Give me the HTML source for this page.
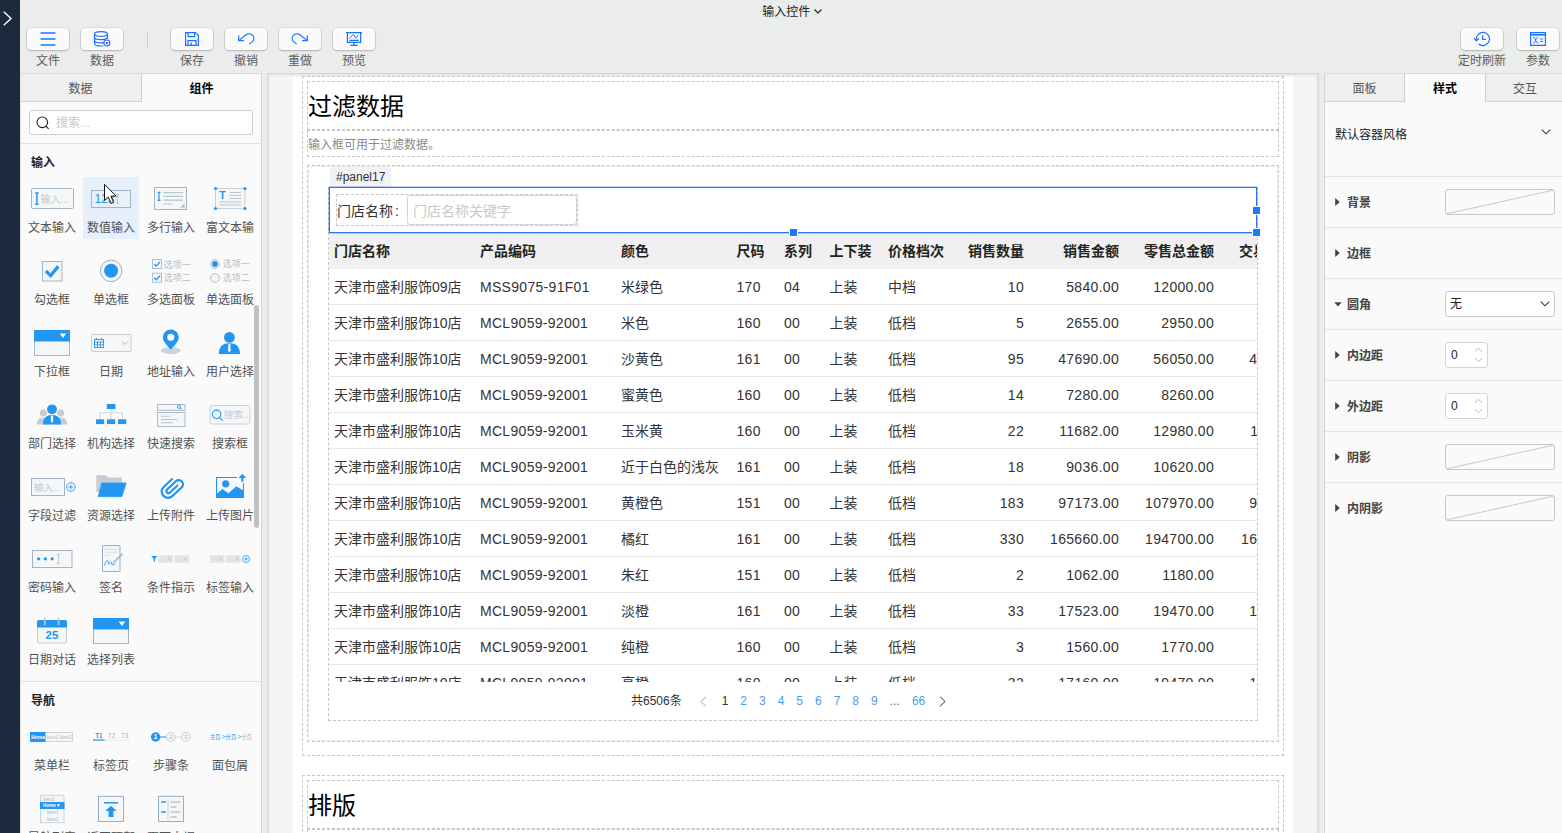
<!DOCTYPE html>
<html lang="zh-CN">
<head>
<meta charset="utf-8">
<title>输入控件</title>
<style>
*{box-sizing:border-box;margin:0;padding:0}
html,body{width:1562px;height:833px;overflow:hidden}
body{position:relative;background:#ebecec;font-family:"Liberation Sans","Noto Sans CJK SC",sans-serif;font-size:12px;color:#333;line-height:1}
.abs{position:absolute}
svg{display:block;overflow:visible}
/* dark rail */
#rail{position:absolute;left:0;top:0;width:20px;height:833px;background:#1c2a3e}
/* title */
#title{position:absolute;left:-1px;top:4px;width:1562px;text-align:center;font-size:12px;color:#222;height:16px;line-height:16px;padding-left:24px}
/* toolbar buttons */
.tb{position:absolute;top:28px;width:42px;height:22px;background:#fafafa;border-radius:4px;box-shadow:0 0 0 .6px rgba(0,0,0,.13),0 1px 2px rgba(0,0,0,.2)}
.tb svg{position:absolute;left:50%;top:50%;transform:translate(-50%,-50%)}
.tl{position:absolute;top:53px;width:80px;margin-left:-40px;text-align:center;font-size:12px;color:#5c5c5c;height:16px;line-height:16px}
#tsep{position:absolute;left:147px;top:33px;width:1px;height:14px;background:#c8c8c8}
/* left panel */
#lp{position:absolute;left:20px;top:73px;width:242px;height:760px;background:#fafafa;box-shadow:inset -1px 0 0 #d4d4d4,inset 0 1px 0 #d9d9d9;overflow:hidden}
.tab{position:absolute;top:1px;height:28px;line-height:30px;text-align:center;font-size:12px;color:#555}
.tab.off{background:#efefef;border-bottom:1px solid #cfcfcf;border-right:1px solid #cfcfcf}
.tab.on{color:#000;font-weight:bold}
#search{position:absolute;left:9px;top:37px;width:224px;height:25px;border:1px solid #ccc;border-radius:3px;background:#fff}
#search span{position:absolute;left:26px;top:1px;line-height:23px;color:#c8c8c8;font-size:12px}
.hr{position:absolute;left:0;height:1px;background:#e3e3e3}
.sec{position:absolute;left:11px;font-weight:bold;font-size:12px;color:#222;height:16px;line-height:16px}
.it{position:absolute;width:56px;height:62px}
.it.hov{background:#e6f0fc}
.it .ic{position:absolute;left:0;top:0;width:56px;height:42px}
.it .ic svg{position:absolute;left:50%;top:21px;transform:translate(-50%,-50%)}
.it .lb{position:absolute;left:4px;width:48px;top:43px;text-align:center;font-size:12px;color:#525252;height:16px;line-height:16px;white-space:nowrap;overflow:hidden}
#lscroll{position:absolute;left:234px;top:232px;width:5px;height:223px;background:#c1c1c1;border-radius:2.5px}
/* canvas */
#cv{position:absolute;left:267px;top:73px;width:1052px;height:760px;background:#f5f5f5;box-shadow:inset 1px 1px 0 #d4d4d4,inset -1px 0 0 #d4d4d4,inset 3px 3px 0 #e9e9e9,inset -3px 0 0 #e9e9e9;overflow:hidden}
#page{position:absolute;left:26px;top:3px;width:1000px;height:760px;background:#fff}
.dash{position:absolute;border:1px dashed #c6c6c6}
.card{position:absolute;border:1px solid #ececec;border-radius:5px;background:#fff}
.h1{font-size:24px;line-height:32px;height:32px;color:#000;white-space:nowrap}
.sub{font-size:12px;line-height:16px;color:#8a8a8a;white-space:nowrap}
.ptag{height:20px;line-height:20px;padding:0 6px;background:#f0f2f5;border-radius:3px 3px 0 3px;font-size:12px;color:#333}
.flabel{font-size:14px;line-height:20px;color:#333;white-space:nowrap}
.finput{width:170px;height:30px;border:1px solid #d4d4d4;border-radius:3px;background:#fff}
.finput span{position:absolute;left:5px;top:1px;line-height:29px;font-size:14px;color:#c9c9c9;white-space:nowrap}
#tbl{position:absolute;width:928px;height:449px;overflow:hidden;background:#fff;font-size:14px;color:#333}
.trh{position:relative;height:36px;background:#f0f0f0;font-weight:bold;color:#222}
.tr{position:relative;height:36px;border-bottom:1px solid #e8e8e8}
.c{position:absolute;top:0;line-height:37px;white-space:nowrap}
.n{letter-spacing:.3px}
.pg{font-size:12px;line-height:16px;white-space:nowrap}
.hd{width:9px;height:9px;background:#1a7cf5;border:1px solid #fff;border-radius:1px}
/* right panel */
#rp{position:absolute;left:1324px;top:73px;width:238px;height:760px;background:#fafafa;box-shadow:inset 1px 0 0 #d4d4d4,inset 0 1px 0 #d9d9d9;overflow:hidden}
.prow{position:absolute;left:1px;width:237px;height:51px;border-top:1px solid #e6e6e6}
.prow .tri{position:absolute;left:10px;top:21px}
.prow .nm{position:absolute;left:22px;top:18px;height:16px;line-height:16px;font-weight:bold;font-size:12px;color:#444}
.sw{position:absolute;left:120px;top:12px;width:110px;height:26px;border:1px solid #c8c8c8;border-radius:3px;background:#fafafa;overflow:hidden}
.spin{position:absolute;left:120px;top:12px;width:43px;height:26px;border:1px solid #d4d4d4;border-radius:3px;background:#fff}
.spin span{position:absolute;left:5px;top:0;line-height:24px;font-size:12px;color:#222}
</style>
</head>
<body>
<div id="rail">
<svg class="abs" style="left:2.5px;top:10.5px" width="9" height="15" viewBox="0 0 9 15"><path d="M0.7 0.7 L8 7.5 L0.7 14.3" fill="none" stroke="#fff" stroke-width="1.4"/></svg>
</div>
<div id="title">输入控件 <svg style="display:inline-block;vertical-align:middle;margin-top:-2px" width="8" height="5" viewBox="0 0 8 5"><path d="M0.5 0.5 L4 4 L7.5 0.5" fill="none" stroke="#222" stroke-width="1.2"/></svg></div>

<!-- TOOLBAR -->
<div id="toolbar">
<div class="tb" style="left:27px"><svg width="16" height="14" viewBox="0 0 16 14"><path d="M1 1H15M1 7H15M1 13H15" stroke="#1a73ff" stroke-width="1.3" stroke-linecap="round" fill="none"/></svg></div>
<div class="tl" style="left:48px">文件</div>
<div class="tb" style="left:81px"><svg width="17" height="16" viewBox="0 0 17 16"><g fill="none" stroke="#2b6bff" stroke-width="1.2"><ellipse cx="7.5" cy="3" rx="6.5" ry="2.4"/><path d="M1 3V12.5C1 14 4 15 7.5 15 8.3 15 9 14.9 9.7 14.8M14 3V8M1 6.3C1 7.7 4 8.7 7.5 8.7 10 8.7 12.4 8.2 13.5 7.3M1 9.5C1 10.9 4 11.9 7.5 11.9 8.5 11.9 9.3 11.8 10 11.7"/><circle cx="13.3" cy="12" r="3"/></g><path d="M13.3 10.4 14.9 12 13.3 13.6 11.7 12Z" fill="#2b6bff"/></svg></div>
<div class="tl" style="left:102px">数据</div>
<div id="tsep"></div>
<div class="tb" style="left:171px"><svg width="14" height="14" viewBox="0 0 14 14"><g fill="none" stroke="#1a73ff" stroke-width="1.2" stroke-linejoin="miter"><path d="M0.6 0.6H10.5L13.4 3.5V13.4H0.6Z"/><path d="M3.2 0.6V4.6H9.6V0.6M3 13.4V8.6H11V13.4M6.2 13.4V10.6"/></g></svg></div>
<div class="tl" style="left:192px">保存</div>
<div class="tb" style="left:225px"><svg width="17" height="12" viewBox="0 0 17 12"><g fill="none" stroke="#1a73ff" stroke-width="1.2"><path d="M1.2 7.6 8.6 1.8C10.5 0.3 13.5 0.5 15.2 2.3 17 4.3 16.6 7 15 8.6L11.8 11.1"/><path d="M1.2 2.6V7.7H6.4"/></g></svg></div>
<div class="tl" style="left:246px">撤销</div>
<div class="tb" style="left:279px"><svg width="17" height="12" viewBox="0 0 17 12"><g fill="none" stroke="#1a73ff" stroke-width="1.2"><path d="M15.8 7.6 8.4 1.8C6.5 0.3 3.5 0.5 1.8 2.3 0 4.3 0.4 7 2 8.6L5.2 11.1"/><path d="M15.8 2.6V7.7H10.6"/></g></svg></div>
<div class="tl" style="left:300px">重做</div>
<div class="tb" style="left:333px"><svg width="16" height="14" viewBox="0 0 16 14"><g fill="none" stroke="#1a73ff" stroke-width="1.2"><path d="M0 0.6H16M1.4 0.6V10.4H14.6V0.6M8 10.4V13.4M4.2 13.4H11.8M3.4 8.4H12.8"/><path d="M3.4 6.4 7.5 2.4 9.5 6 12.6 3.2" stroke-width="1"/></g></svg></div>
<div class="tl" style="left:354px">预览</div>
<div class="tb" style="left:1461px"><svg width="17" height="15" viewBox="0 0 17 15"><g fill="none" stroke="#1a73ff" stroke-width="1.2"><path d="M2.900 8.400A6.600 6.600 0 1 1 5.200 12.500"/><path d="M0.400 6.900 2.900 9.500 5.500 6.900"/><path d="M9.100 3.800V7.900H12.400"/></g></svg></div>
<div class="tl" style="left:1482px">定时刷新</div>
<div class="tb" style="left:1517px"><svg width="16" height="14" viewBox="0 0 16 14"><g fill="none" stroke="#1a73ff" stroke-width="1.2"><path d="M0.6 0.6H15.4V13.4H0.6Z"/><path d="M0.6 2.8H15.4" stroke-width="1.6"/><path d="M3 5.4C4.6 5 5 6.6 5.6 8.2 6.2 9.8 6.8 11.2 8.4 10.8M8.2 5.2C6.8 5 6.2 6.6 5.6 8.2 5 9.8 4.4 11.2 3 11" stroke-width="1"/><path d="M10.2 7H13.2M10.2 9.4H13.2" stroke-width="1"/></g></svg></div>
<div class="tl" style="left:1538px">参数</div>
</div>

<!-- LEFT PANEL -->
<div id="lp">
<div class="tab off" style="left:0;width:122px">数据</div><div class="tab on" style="left:122px;width:119px">组件</div>
<div id="search"><svg class="abs" style="left:6px;top:4.500px" width="14" height="14" viewBox="0 0 14 14"><circle cx="6.3" cy="6.3" r="5.3" fill="none" stroke="#222" stroke-width="1.1"/><path d="M10 10.2 12.6 12.9" stroke="#222" stroke-width="1.2"/></svg><span>搜索...</span></div>
<div class="hr" style="top:70px;width:241px"></div>
<div class="sec" style="top:82px">输入</div>
<div class="hr" style="top:608px;width:241px"></div>
<div class="sec" style="top:620px">导航</div>
<div class="it" style="left:4px;top:104px"><div class="lb">文本输入</div></div>
<div class="it hov" style="left:63px;top:104px"><div class="lb">数值输入</div></div>
<div class="it" style="left:123px;top:104px"><div class="lb">多行输入</div></div>
<div class="it" style="left:182px;top:104px"><div class="lb">富文本输入</div></div>
<div class="it" style="left:4px;top:176px"><div class="lb">勾选框</div></div>
<div class="it" style="left:63px;top:176px"><div class="lb">单选框</div></div>
<div class="it" style="left:123px;top:176px"><div class="lb">多选面板</div></div>
<div class="it" style="left:182px;top:176px"><div class="lb">单选面板</div></div>
<div class="it" style="left:4px;top:248px"><div class="lb">下拉框</div></div>
<div class="it" style="left:63px;top:248px"><div class="lb">日期</div></div>
<div class="it" style="left:123px;top:248px"><div class="lb">地址输入</div></div>
<div class="it" style="left:182px;top:248px"><div class="lb">用户选择</div></div>
<div class="it" style="left:4px;top:320px"><div class="lb">部门选择</div></div>
<div class="it" style="left:63px;top:320px"><div class="lb">机构选择</div></div>
<div class="it" style="left:123px;top:320px"><div class="lb">快速搜索</div></div>
<div class="it" style="left:182px;top:320px"><div class="lb">搜索框</div></div>
<div class="it" style="left:4px;top:392px"><div class="lb">字段过滤</div></div>
<div class="it" style="left:63px;top:392px"><div class="lb">资源选择</div></div>
<div class="it" style="left:123px;top:392px"><div class="lb">上传附件</div></div>
<div class="it" style="left:182px;top:392px"><div class="lb">上传图片</div></div>
<div class="it" style="left:4px;top:464px"><div class="lb">密码输入</div></div>
<div class="it" style="left:63px;top:464px"><div class="lb">签名</div></div>
<div class="it" style="left:123px;top:464px"><div class="lb">条件指示</div></div>
<div class="it" style="left:182px;top:464px"><div class="lb">标签输入</div></div>
<div class="it" style="left:4px;top:536px"><div class="lb">日期对话</div></div>
<div class="it" style="left:63px;top:536px"><div class="lb">选择列表</div></div>
<div class="it" style="left:4px;top:642px"><div class="lb">菜单栏</div></div>
<div class="it" style="left:63px;top:642px"><div class="lb">标签页</div></div>
<div class="it" style="left:123px;top:642px"><div class="lb">步骤条</div></div>
<div class="it" style="left:182px;top:642px"><div class="lb">面包屑</div></div>
<div class="it" style="left:4px;top:714px"><div class="lb">导航列表</div></div>
<div class="it" style="left:63px;top:714px"><div class="lb">返回顶部</div></div>
<div class="it" style="left:123px;top:714px"><div class="lb">页面大纲</div></div>
<svg class="abs" style="left:0;top:0" width="242" height="760" viewBox="20 73 242 760" font-family="Liberation Sans, Noto Sans CJK SC, sans-serif"><rect x="31.5" y="188.5" width="42" height="20" fill="#f4f6f8" stroke="#a3b4c8" stroke-width="1" rx="1" /><path d="M35.200 192.900H38.600M35.200 204.300H38.600M36.900 192.900V204.300" stroke="#2196f3" stroke-width="1.500" fill="none"/><text x="40.500" y="203.200" font-size="10" fill="#bfcacc">输入...</text><rect x="91.5" y="190.5" width="39" height="17" fill="#e9f0f9" stroke="#a3b4c8" stroke-width="1" rx="0" /><text x="94.500" y="203" font-size="12" fill="#2196f3">123</text><path d="M116 194.5H119M116 203.5H119M117.5 194.5V203.5" stroke="#c0c9d2" stroke-width="1" fill="none"/><rect x="154.5" y="187.5" width="32" height="22" fill="#f4f6f8" stroke="#a3b4c8" stroke-width="1" rx="0" /><path d="M157.5 192.3H160.5M157.5 200.3H160.5M159 192.3V200.3" stroke="#2196f3" stroke-width="1.2" fill="none"/><path d="M163.5 192.6H183M163.5 196.4H183M163.5 200.2H183M163.5 204H172.5" stroke="#b7c6c8" stroke-width="1.2" fill="none"/><path d="M184.5 203.5V207.5H180.5Z" fill="#a9b7c4"/><rect x="215.5" y="188.5" width="29.5" height="20" fill="#f4f6f8" stroke="#c5d0da" stroke-width="1" rx="0" /><circle cx="215.5" cy="188.5" r="1.6" fill="#2196f3"/><circle cx="245" cy="188.5" r="1.6" fill="#2196f3"/><circle cx="215.5" cy="208.5" r="1.6" fill="#2196f3"/><circle cx="245" cy="208.5" r="1.6" fill="#2196f3"/><text x="219.300" y="199.400" font-size="10.500" font-weight="bold" fill="#2196f3">T</text><path d="M229.5 192.5H241M229.5 195.5H241M229.5 198.5H241M219.5 202H241M219.5 205H241" stroke="#b7c6c8" stroke-width="1" fill="none"/><rect x="42.5" y="261.5" width="19.5" height="19.5" fill="#f4f6f8" stroke="#a3b4c8" stroke-width="1" rx="0" /><path d="M45.900 271 50.600 275.600 58.300 266.400" stroke="#2196f3" stroke-width="3.200" fill="none"/><circle cx="111.1" cy="270.8" r="10.8" fill="#f4f6f8" stroke="#8fa6c0" stroke-width="0.9"/><circle cx="111.1" cy="270.8" r="7" fill="#2196f3"/><rect x="152.5" y="259.5" width="9" height="9" fill="#f4f6f8" stroke="#a9b8c9" stroke-width="0.9" rx="0" /><path d="M154.3 264.1 156.3 266.1 160 261.9" stroke="#2196f3" stroke-width="1.4" fill="none"/><text x="163.8" y="267.5" font-size="9" fill="#b3bec8">选项一</text><rect x="152.5" y="273.2" width="9" height="9" fill="#f4f6f8" stroke="#a9b8c9" stroke-width="0.9" rx="0" /><path d="M154.3 277.8 156.3 279.8 160 275.59999999999997" stroke="#2196f3" stroke-width="1.4" fill="none"/><text x="163.8" y="281.2" font-size="9" fill="#b3bec8">选项二</text><circle cx="215" cy="264" r="4.4" fill="#f4f6f8" stroke="#a9b8c9" stroke-width="0.9"/><circle cx="215" cy="264" r="2.9" fill="#2196f3"/><text x="222.8" y="267.4" font-size="9" fill="#b3bec8">选项一</text><circle cx="215" cy="278" r="4.4" fill="#f4f6f8" stroke="#a9b8c9" stroke-width="0.9"/><text x="222.8" y="281.4" font-size="9" fill="#b3bec8">选项二</text><rect x="34.5" y="330.5" width="35" height="25" fill="#f4f6f8" stroke="#a3b4c8" stroke-width="1" rx="0" /><rect x="34" y="330" width="36" height="11.5" fill="#2196f3"/><path d="M59.7 333.6H66.3L63 338Z" fill="#fff"/><rect x="91.5" y="334.5" width="39.5" height="17" fill="#f4f6f8" stroke="#c3ced9" stroke-width="1" rx="1" /><g stroke="#2196f3" stroke-width="0.9" fill="none"><rect x="94.5" y="339.5" width="9" height="8"/><path d="M94.5 342H103.5M96.5 338V340M101.5 338V340M97.5 342V347.5M100.5 342V347.5M94.5 344.8H103.5"/></g><path d="M122 341.5 125 344.5 128 341.5" stroke="#b0bac4" stroke-width="1" fill="none"/><ellipse cx="170.8" cy="350.6" rx="10" ry="3.4" fill="#c9d3dc"/><path d="M170.8 349.8C168 346 162.8 341.5 162.8 337.4A8 8 0 0 1 178.8 337.4C178.800 341.5 173.6 346 170.8 349.800Z" fill="#2196f3"/><circle cx="170.8" cy="337.2" r="3.5" fill="#fff"/><circle cx="229.4" cy="337.4" r="5.4" fill="#2196f3"/><path d="M218.8 354C218.8 345.2 224.1 343.2 229.4 343.2C234.70000000000002 343.2 240.0 345.2 240.0 354Z" fill="#2196f3"/><path d="M228.4 343.7H230.4L230.70000000000002 350.5L229.4 352.5L228.1 350.5Z" fill="#fff"/><circle cx="43.4" cy="413" r="3.6" fill="#c3ccd5"/><path d="M36.8 424.5C36.8 419.5 40.1 417.5 43.4 417.5C46.699999999999996 417.5 50.0 419.5 50.0 424.5Z" fill="#c3ccd5"/><circle cx="60.6" cy="413" r="3.6" fill="#c3ccd5"/><path d="M54.0 424.5C54.0 419.5 57.300000000000004 417.5 60.6 417.5C63.9 417.5 67.2 419.5 67.2 424.5Z" fill="#c3ccd5"/><circle cx="52" cy="409.3" r="4.9" fill="#2196f3"/><path d="M43 424.5C43 417 47.5 415 52 415C56.5 415 61 417 61 424.5Z" fill="#2196f3"/><path d="M51 415.5H53L53.3 421.0L52 423.0L50.7 421.0Z" fill="#fff"/><path d="M111 409V419.5M99.8 419.5V412.7H122.4V419.500" stroke="#cdd8e0" stroke-width="1.1" fill="none"/><rect x="106.8" y="404" width="8.6" height="5" fill="#2196f3"/><rect x="96" y="419.300" width="8.2" height="4.8" fill="#2196f3"/><rect x="107" y="419.300" width="8.2" height="4.8" fill="#2196f3"/><rect x="118" y="419.300" width="8.2" height="4.8" fill="#2196f3"/><rect x="157.5" y="404.5" width="27.5" height="5.8" fill="#f4f6f8" stroke="#a3b4c8" stroke-width="0.9" rx="0" /><rect x="157.5" y="412.5" width="27.5" height="14" fill="#f4f6f8" stroke="#a3b4c8" stroke-width="0.9" rx="0" /><circle cx="179" cy="406.8" r="1.6" fill="none" stroke="#2196f3" stroke-width="0.9"/><path d="M180.2 408 181.6 409.4" stroke="#2196f3" stroke-width="0.9"/><path d="M161 416.200H170M161 419.500H177M161 422.800H173" stroke="#b7c6c8" stroke-width="1.1" fill="none"/><rect x="210" y="405.5" width="40" height="18.5" fill="#f4f6f8" stroke="#c9d3dd" stroke-width="1" rx="2" /><circle cx="216.600" cy="414.300" r="4.2" fill="none" stroke="#2196f3" stroke-width="1.1"/><path d="M219.600 417.500 222.600 420.700" stroke="#2196f3" stroke-width="1.2"/><text x="224" y="418.300" font-size="9.5" fill="#c3cad2">搜索...</text><rect x="31.5" y="478.5" width="33" height="17" fill="#f4f6f8" stroke="#a3b4c8" stroke-width="1" rx="0" /><text x="34" y="491" font-size="9.5" fill="#c3cad2">输入...</text><circle cx="70.900" cy="487" r="4.3" fill="none" stroke="#2196f3" stroke-width="0.9"/><path d="M68.400 487H73.400M70.900 484.500V489.500" stroke="#2196f3" stroke-width="0.9"/><path d="M96.300 475.300H106L108 477.600H121.800V492H96.300Z" fill="#c4ccd4"/><path d="M101.800 483H126.200L121.800 496.600H98.200Z" fill="#2196f3" stroke="#2196f3" stroke-width="0.8" stroke-linejoin="round"/><g transform="translate(172.200,487.600) rotate(-43)" fill="none" stroke="#2196f3" stroke-width="2.200" stroke-linecap="butt"><path d="M6.500 -6.300H-5.800A6.300 6.300 0 0 0 -5.800 6.300H7A4.200 4.200 0 0 0 7 -2.100H-5A2.100 2.100 0 0 0 -5 2.100H6"/></g><path d="M216.500 477.500V497.500H243.500V483" fill="#f4f6f9" stroke="none"/><path d="M216 477H237V478H217V493.400L222.500 489 228.500 493.200 236.300 486.200 243 490.300V483H244V498H216Z" fill="#2196f3"/><circle cx="225.700" cy="483.800" r="3.600" fill="#2196f3"/><path d="M242.300 473.800 246.200 478H243.400V481.800H241.200V478H238.400Z" fill="#2196f3"/><rect x="32.5" y="550.5" width="39.5" height="17" fill="#f4f6f8" stroke="#a3b4c8" stroke-width="1" rx="0" /><circle cx="38.6" cy="558.800" r="1.6" fill="#2196f3"/><circle cx="45.4" cy="558.800" r="1.6" fill="#2196f3"/><circle cx="52.2" cy="558.800" r="1.6" fill="#2196f3"/><path d="M57 554.500H60M57 563.500H60M58.500 554.500V563.500" stroke="#c0c9d2" stroke-width="1" fill="none"/><rect x="102.5" y="545.5" width="17.5" height="26" fill="#f4f6f8" stroke="#8fa6c0" stroke-width="0.9" rx="0.5" /><path d="M104.500 549.200H117.500M104.500 552.300H117.500M104.500 555.400H110" stroke="#cfd7de" stroke-width="0.8" fill="none"/><path d="M104.600 565.600C105 561.500 107.800 559.500 108.400 561.200C108.800 562.600 107 564.600 109.200 563.800C110.600 563.200 110.600 561.600 111.400 562.400C112 563.200 111 565 112.800 564.600C114 564.300 114.600 563.800 115.400 563.600" stroke="#2196f3" stroke-width="0.9" fill="none"/><path d="M113.400 561.400 121.800 553.200 123 554.400 114.600 562.600 112.600 563.200Z" fill="#aab4be"/><path d="M151.200 556H157.400L155 558.800V562.200L153.600 561V558.800Z" fill="#2196f3"/><rect x="158.3" y="555.2" width="14.600" height="7.500" fill="#e1e5e9"/><path d="M167.3 557.2L170.9 560.8000000000001M170.9 557.2L167.3 560.8000000000001" stroke="#bcc5ce" stroke-width="0.7"/><rect x="174.5" y="555.2" width="14.600" height="7.500" fill="#e1e5e9"/><path d="M183.5 557.2L187.1 560.8000000000001M187.1 557.2L183.5 560.8000000000001" stroke="#bcc5ce" stroke-width="0.7"/><rect x="210" y="555.2" width="14.600" height="7.500" fill="#e1e5e9"/><path d="M219 557.2L222.6 560.8000000000001M222.6 557.2L219 560.8000000000001" stroke="#bcc5ce" stroke-width="0.7"/><rect x="226.2" y="555.2" width="14.600" height="7.500" fill="#e1e5e9"/><path d="M235.2 557.2L238.79999999999998 560.8000000000001M238.79999999999998 557.2L235.2 560.8000000000001" stroke="#bcc5ce" stroke-width="0.7"/><circle cx="246" cy="559" r="3.500" fill="none" stroke="#2196f3" stroke-width="0.8"/><path d="M244.200 559H247.800M246 557.200V560.800" stroke="#2196f3" stroke-width="0.9"/><rect x="37.5" y="620.5" width="29" height="22.5" fill="#f4f6f8" stroke="#c3ced9" stroke-width="1" rx="1.5" /><path d="M37 627.500V622A2 2 0 0 1 39 620H65A2 2 0 0 1 67 622V627.500Z" fill="#2196f3"/><path d="M44.800 618.500V624.500M58.600 618.500V624.500" stroke="#b9c6cc" stroke-width="1.8" stroke-linecap="round"/><text x="52" y="639.200" font-size="11.500" font-weight="bold" fill="#2196f3" text-anchor="middle">25</text><rect x="93.5" y="618.5" width="35" height="25" fill="#f4f6f8" stroke="#a3b4c8" stroke-width="1" rx="0" /><rect x="93" y="618" width="36" height="11.5" fill="#2196f3"/><path d="M118.7 621.6H125.3L122 626Z" fill="#fff"/><rect x="30.5" y="732.5" width="42" height="9" fill="#f4f6f8" stroke="#c3ced9" stroke-width="0.8" rx="0" /><rect x="30" y="732" width="15.500" height="10" fill="#2196f3"/><text x="31.200" y="739" font-size="5" font-weight="bold" fill="#fff">Home</text><text x="46.400" y="739" font-size="4.800" fill="#b3bec8">Item1 Item2</text><text x="95.200" y="737.800" font-size="6.300" font-weight="bold" fill="#2196f3">T1</text><text x="107.800" y="737.800" font-size="6.300" fill="#a9b5c0">T2</text><text x="121" y="737.800" font-size="6.300" fill="#a9b5c0">T3</text><path d="M93 740.200H129.400" stroke="#dfe5ea" stroke-width="0.8"/><path d="M93 740H104.600" stroke="#2196f3" stroke-width="1.200"/><path d="M160 737H166.500" stroke="#2196f3" stroke-width="1"/><path d="M175.500 737H181.500" stroke="#d5dde4" stroke-width="1"/><circle cx="155.600" cy="737" r="4.700" fill="#2196f3"/><text x="155.600" y="739.300" font-size="6.500" font-weight="bold" fill="#fff" text-anchor="middle">1</text><circle cx="170.800" cy="737" r="4.400" fill="#f4f6f8" stroke="#b3bec8" stroke-width="0.700"/><text x="170.800" y="739.300" font-size="6" fill="#a9b5c0" text-anchor="middle">2</text><circle cx="186" cy="737" r="4.400" fill="#f4f6f8" stroke="#b3bec8" stroke-width="0.700"/><text x="186" y="739.300" font-size="6" fill="#a9b5c0" text-anchor="middle">3</text><text x="210" y="739" font-size="5.300" fill="#2196f3">主页</text><text x="221.600" y="739.300" font-size="6.500" fill="#2196f3">&gt;</text><text x="225.600" y="739" font-size="5.300" fill="#2196f3">分页</text><text x="237.200" y="739.300" font-size="6.500" fill="#2196f3">&gt;</text><text x="241.200" y="739" font-size="5.300" fill="#a9b5c0">分页</text><rect x="40.5" y="795.3" width="23.5" height="27.4" fill="#f4f6f8" stroke="#c3ced9" stroke-width="0.9" rx="0" /><rect x="40" y="802" width="24.500" height="7" fill="#2196f3"/><text x="43" y="800.600" font-size="4.600" fill="#a9b5c0">Item1</text><text x="43" y="807.400" font-size="4.600" font-weight="bold" fill="#fff">Home ▾</text><text x="47" y="814.200" font-size="4.600" fill="#a9b5c0">Item2</text><text x="47" y="821" font-size="4.600" fill="#a9b5c0">Item2</text><rect x="98.5" y="796.3" width="25" height="25.2" fill="#f4f6f8" stroke="#8fa6c0" stroke-width="0.9" rx="0" /><path d="M104 802.800H118" stroke="#2196f3" stroke-width="1.500"/><path d="M111 805.800 116.600 811H113.400V817H108.600V811H105.400Z" fill="#2196f3"/><rect x="158.5" y="796.3" width="25" height="25.2" fill="#f4f6f8" stroke="#8fa6c0" stroke-width="0.9" rx="0" /><path d="M168 798.500V819.500" stroke="#cfd7de" stroke-width="1.200"/><path d="M161.200 802H166M161.200 812H166" stroke="#2196f3" stroke-width="1.500"/><path d="M170.500 802H180.500M170.500 807H176.500M170.500 812H180.500M170.500 817H176.500" stroke="#b7c6c8" stroke-width="1.400"/><path d="M104.500 184.300V200.600L108.300 197.100L111 203.400L113.600 202.300L110.900 196.100H116.200Z" fill="#fff" stroke="#111" stroke-width="1" stroke-linejoin="miter"/></svg>
<div id="lscroll"></div>
<div class="abs" style="left:0;top:0;width:1px;height:760px;background:#e2e2e2"></div>
</div>

<!-- CANVAS -->
<div id="cv">
<div id="page"></div>
<div class="dash" style="left:35px;top:3px;width:982px;height:680px;"></div>
<div class="dash" style="left:40px;top:8px;width:972px;height:49px;"></div>
<div class="abs h1" style="left:41px;top:18px">过滤数据</div>
<div class="dash" style="left:40px;top:57px;width:972px;height:27px;"></div>
<div class="abs sub" style="left:41px;top:64px">输入框可用于过滤数据。</div>
<div class="dash" style="left:40px;top:92px;width:972px;height:577px;"></div>
<div class="card" style="left:41px;top:93px;width:970px;height:575px;"></div>
<div class="abs ptag" style="left:63px;top:94px">#panel17</div>
<div class="dash" style="left:61px;top:114px;width:930px;height:534px;"></div>
<div class="abs" style="left:63px;top:115px;width:926px;height:44px;background:#fff"></div>
<div class="dash" style="left:69px;top:121px;width:242px;height:32px;"></div>
<div class="abs flabel" style="left:70px;top:128px">门店名称<span style="margin-left:2px">:</span></div>
<div class="abs finput" style="left:140px;top:122px"><span>门店名称关键字</span></div>
<div id="tbl" style="left:62px;top:160px"><div class="trh"><span class="c " style="left:5px">门店名称</span><span class="c " style="left:151px">产品编码</span><span class="c " style="left:292px">颜色</span><span class="c " style="left:407.5px">尺码</span><span class="c " style="left:455px">系列</span><span class="c " style="left:500.5px">上下装</span><span class="c " style="left:559px">价格档次</span><span class="c r " style="right:233px">销售数量</span><span class="c r " style="right:138px">销售金额</span><span class="c r " style="right:43px">零售总金额</span><span class="c r " style="right:-52px">交易总金额</span></div><div class="tr"><span class="c " style="left:5px">天津市盛利服饰09店</span><span class="c n" style="left:151px">MSS9075-91F01</span><span class="c " style="left:292px">米绿色</span><span class="c n" style="left:407.5px">170</span><span class="c n" style="left:455px">04</span><span class="c " style="left:500.5px">上装</span><span class="c " style="left:559px">中档</span><span class="c r n" style="right:233px">10</span><span class="c r n" style="right:138px">5840.00</span><span class="c r n" style="right:43px">12000.00</span><span class="c r n" style="right:-53px">5840.00</span></div><div class="tr"><span class="c " style="left:5px">天津市盛利服饰10店</span><span class="c n" style="left:151px">MCL9059-92001</span><span class="c " style="left:292px">米色</span><span class="c n" style="left:407.5px">160</span><span class="c n" style="left:455px">00</span><span class="c " style="left:500.5px">上装</span><span class="c " style="left:559px">低档</span><span class="c r n" style="right:233px">5</span><span class="c r n" style="right:138px">2655.00</span><span class="c r n" style="right:43px">2950.00</span><span class="c r n" style="right:-53px">2655.00</span></div><div class="tr"><span class="c " style="left:5px">天津市盛利服饰10店</span><span class="c n" style="left:151px">MCL9059-92001</span><span class="c " style="left:292px">沙黄色</span><span class="c n" style="left:407.5px">161</span><span class="c n" style="left:455px">00</span><span class="c " style="left:500.5px">上装</span><span class="c " style="left:559px">低档</span><span class="c r n" style="right:233px">95</span><span class="c r n" style="right:138px">47690.00</span><span class="c r n" style="right:43px">56050.00</span><span class="c r n" style="right:-53px">47690.00</span></div><div class="tr"><span class="c " style="left:5px">天津市盛利服饰10店</span><span class="c n" style="left:151px">MCL9059-92001</span><span class="c " style="left:292px">蜜黄色</span><span class="c n" style="left:407.5px">160</span><span class="c n" style="left:455px">00</span><span class="c " style="left:500.5px">上装</span><span class="c " style="left:559px">低档</span><span class="c r n" style="right:233px">14</span><span class="c r n" style="right:138px">7280.00</span><span class="c r n" style="right:43px">8260.00</span><span class="c r n" style="right:-53px">7280.00</span></div><div class="tr"><span class="c " style="left:5px">天津市盛利服饰10店</span><span class="c n" style="left:151px">MCL9059-92001</span><span class="c " style="left:292px">玉米黄</span><span class="c n" style="left:407.5px">160</span><span class="c n" style="left:455px">00</span><span class="c " style="left:500.5px">上装</span><span class="c " style="left:559px">低档</span><span class="c r n" style="right:233px">22</span><span class="c r n" style="right:138px">11682.00</span><span class="c r n" style="right:43px">12980.00</span><span class="c r n" style="right:-53px">11682.00</span></div><div class="tr"><span class="c " style="left:5px">天津市盛利服饰10店</span><span class="c n" style="left:151px">MCL9059-92001</span><span class="c " style="left:292px">近于白色的浅灰</span><span class="c n" style="left:407.5px">161</span><span class="c n" style="left:455px">00</span><span class="c " style="left:500.5px">上装</span><span class="c " style="left:559px">低档</span><span class="c r n" style="right:233px">18</span><span class="c r n" style="right:138px">9036.00</span><span class="c r n" style="right:43px">10620.00</span><span class="c r n" style="right:-53px">9036.00</span></div><div class="tr"><span class="c " style="left:5px">天津市盛利服饰10店</span><span class="c n" style="left:151px">MCL9059-92001</span><span class="c " style="left:292px">黄橙色</span><span class="c n" style="left:407.5px">151</span><span class="c n" style="left:455px">00</span><span class="c " style="left:500.5px">上装</span><span class="c " style="left:559px">低档</span><span class="c r n" style="right:233px">183</span><span class="c r n" style="right:138px">97173.00</span><span class="c r n" style="right:43px">107970.00</span><span class="c r n" style="right:-53px">97173.00</span></div><div class="tr"><span class="c " style="left:5px">天津市盛利服饰10店</span><span class="c n" style="left:151px">MCL9059-92001</span><span class="c " style="left:292px">橘红</span><span class="c n" style="left:407.5px">161</span><span class="c n" style="left:455px">00</span><span class="c " style="left:500.5px">上装</span><span class="c " style="left:559px">低档</span><span class="c r n" style="right:233px">330</span><span class="c r n" style="right:138px">165660.00</span><span class="c r n" style="right:43px">194700.00</span><span class="c r n" style="right:-53px">165660.00</span></div><div class="tr"><span class="c " style="left:5px">天津市盛利服饰10店</span><span class="c n" style="left:151px">MCL9059-92001</span><span class="c " style="left:292px">朱红</span><span class="c n" style="left:407.5px">151</span><span class="c n" style="left:455px">00</span><span class="c " style="left:500.5px">上装</span><span class="c " style="left:559px">低档</span><span class="c r n" style="right:233px">2</span><span class="c r n" style="right:138px">1062.00</span><span class="c r n" style="right:43px">1180.00</span><span class="c r n" style="right:-53px">1062.00</span></div><div class="tr"><span class="c " style="left:5px">天津市盛利服饰10店</span><span class="c n" style="left:151px">MCL9059-92001</span><span class="c " style="left:292px">淡橙</span><span class="c n" style="left:407.5px">161</span><span class="c n" style="left:455px">00</span><span class="c " style="left:500.5px">上装</span><span class="c " style="left:559px">低档</span><span class="c r n" style="right:233px">33</span><span class="c r n" style="right:138px">17523.00</span><span class="c r n" style="right:43px">19470.00</span><span class="c r n" style="right:-53px">17523.00</span></div><div class="tr"><span class="c " style="left:5px">天津市盛利服饰10店</span><span class="c n" style="left:151px">MCL9059-92001</span><span class="c " style="left:292px">纯橙</span><span class="c n" style="left:407.5px">160</span><span class="c n" style="left:455px">00</span><span class="c " style="left:500.5px">上装</span><span class="c " style="left:559px">低档</span><span class="c r n" style="right:233px">3</span><span class="c r n" style="right:138px">1560.00</span><span class="c r n" style="right:43px">1770.00</span><span class="c r n" style="right:-53px">1560.00</span></div><div class="tr"><span class="c " style="left:5px">天津市盛利服饰10店</span><span class="c n" style="left:151px">MCL9059-92001</span><span class="c " style="left:292px">亮橙</span><span class="c n" style="left:407.5px">160</span><span class="c n" style="left:455px">00</span><span class="c " style="left:500.5px">上装</span><span class="c " style="left:559px">低档</span><span class="c r n" style="right:233px">33</span><span class="c r n" style="right:138px">17160.00</span><span class="c r n" style="right:43px">19470.00</span><span class="c r n" style="right:-53px">17160.00</span></div></div>
<div class="abs pg" style="left:364px;top:620px;color:#333">共6506条</div><svg class="abs" style="left:433px;top:623px" width="7" height="11" viewBox="0 0 7 11"><path d="M6 0.700 1 5.500 6 10.300" fill="none" stroke="#c0c4cc" stroke-width="1.100"/></svg><div class="abs pg" style="left:438px;width:40px;text-align:center;top:620px;color:#303133">1</div><div class="abs pg" style="left:456.6px;width:40px;text-align:center;top:620px;color:#4a9cf0">2</div><div class="abs pg" style="left:475.29999999999995px;width:40px;text-align:center;top:620px;color:#4a9cf0">3</div><div class="abs pg" style="left:494px;width:40px;text-align:center;top:620px;color:#4a9cf0">4</div><div class="abs pg" style="left:512.7px;width:40px;text-align:center;top:620px;color:#4a9cf0">5</div><div class="abs pg" style="left:531.3px;width:40px;text-align:center;top:620px;color:#4a9cf0">6</div><div class="abs pg" style="left:550px;width:40px;text-align:center;top:620px;color:#4a9cf0">7</div><div class="abs pg" style="left:568.7px;width:40px;text-align:center;top:620px;color:#4a9cf0">8</div><div class="abs pg" style="left:587.3px;width:40px;text-align:center;top:620px;color:#4a9cf0">9</div><div class="abs pg" style="left:607.7px;width:40px;text-align:center;top:620px;color:#666">...</div><div class="abs pg" style="left:631.6px;width:40px;text-align:center;top:620px;color:#4a9cf0">66</div><svg class="abs" style="left:672px;top:623px" width="7" height="11" viewBox="0 0 7 11"><path d="M1 0.700 6 5.500 1 10.300" fill="none" stroke="#303133" stroke-width="1"/></svg>
<div class="abs" style="left:62px;top:114px;width:928px;height:46px;border:1px solid #2b73f0;box-shadow:0 0 0 0.3px #2b73f0"></div>
<div class="abs hd" style="left:521.5px;top:155.0px"></div>
<div class="abs hd" style="left:985.0px;top:132.5px"></div>
<div class="abs hd" style="left:985.0px;top:155.0px"></div>
<div class="dash" style="left:35px;top:702px;width:982px;height:126px;"></div>
<div class="dash" style="left:40px;top:707px;width:972px;height:49px;"></div>
<div class="abs h1" style="left:41px;top:717px">排版</div>
<div class="dash" style="left:40px;top:756px;width:972px;height:27px;"></div>
</div>

<!-- RIGHT PANEL -->
<div id="rp">
<div class="tab off" style="left:1px;width:80px">面板</div><div class="tab on" style="left:81px;width:80px">样式</div><div class="tab off" style="left:161px;width:79px;border-right:none;border-left:1px solid #cfcfcf">交互</div>
<div class="abs" style="left:11px;top:54px;font-size:12px;line-height:16px;color:#222">默认容器风格</div>
<svg class="abs" style="left:217px;top:56px" width="10" height="6" viewBox="0 0 10 6"><path d="M0.800 0.600 5 4.800 9.200 0.600" fill="none" stroke="#333" stroke-width="1.100"/></svg>
<div class="prow" style="top:103px"><svg class="tri" width="5" height="8" viewBox="0 0 5 8"><path d="M0.200 0 4.800 4 0.200 8Z" fill="#444"/></svg><div class="nm">背景</div><div class="sw"><svg width="108" height="24" viewBox="0 0 108 24" preserveAspectRatio="none"><path d="M0 24 108 0" stroke="#bdbdbd" stroke-width="0.800" fill="none"/></svg></div></div>
<div class="prow" style="top:154px"><svg class="tri" width="5" height="8" viewBox="0 0 5 8"><path d="M0.200 0 4.800 4 0.200 8Z" fill="#444"/></svg><div class="nm">边框</div></div>
<div class="prow" style="top:205px"><svg class="tri" style="left:9px;top:23px" width="8" height="5" viewBox="0 0 8 5"><path d="M0.300 0.300H7.700L4 4.500Z" fill="#444"/></svg><div class="nm">圆角</div><div class="sw" style="background:#fff"><span style="position:absolute;left:4px;top:0;line-height:25px;font-size:12px;color:#222">无</span><svg class="abs" style="left:94px;top:9px" width="10" height="6" viewBox="0 0 10 6"><path d="M0.800 0.600 5 4.800 9.200 0.600" fill="none" stroke="#333" stroke-width="1.100"/></svg></div></div>
<div class="prow" style="top:256px"><svg class="tri" width="5" height="8" viewBox="0 0 5 8"><path d="M0.200 0 4.800 4 0.200 8Z" fill="#444"/></svg><div class="nm">内边距</div><div class="spin"><span>0</span><svg class="abs" style="left:28px;top:4px" width="9" height="16" viewBox="0 0 9 16"><path d="M1 4.600 4.500 1.400 8 4.600M1 11.400 4.500 14.600 8 11.400" fill="none" stroke="#a9b3a6" stroke-width="0.900"/></svg></div></div>
<div class="prow" style="top:307px"><svg class="tri" width="5" height="8" viewBox="0 0 5 8"><path d="M0.200 0 4.800 4 0.200 8Z" fill="#444"/></svg><div class="nm">外边距</div><div class="spin"><span>0</span><svg class="abs" style="left:28px;top:4px" width="9" height="16" viewBox="0 0 9 16"><path d="M1 4.600 4.500 1.400 8 4.600M1 11.400 4.500 14.600 8 11.400" fill="none" stroke="#a9b3a6" stroke-width="0.900"/></svg></div></div>
<div class="prow" style="top:358px"><svg class="tri" width="5" height="8" viewBox="0 0 5 8"><path d="M0.200 0 4.800 4 0.200 8Z" fill="#444"/></svg><div class="nm">阴影</div><div class="sw"><svg width="108" height="24" viewBox="0 0 108 24" preserveAspectRatio="none"><path d="M0 24 108 0" stroke="#bdbdbd" stroke-width="0.800" fill="none"/></svg></div></div>
<div class="prow" style="top:409px"><svg class="tri" width="5" height="8" viewBox="0 0 5 8"><path d="M0.200 0 4.800 4 0.200 8Z" fill="#444"/></svg><div class="nm">内阴影</div><div class="sw"><svg width="108" height="24" viewBox="0 0 108 24" preserveAspectRatio="none"><path d="M0 24 108 0" stroke="#bdbdbd" stroke-width="0.800" fill="none"/></svg></div></div>
</div>

</body>
</html>
